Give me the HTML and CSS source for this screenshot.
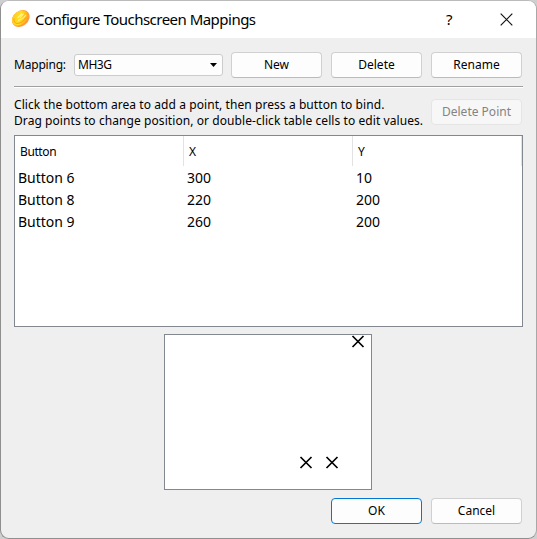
FILE: index.html
```
<!DOCTYPE html>
<html lang="en">
<head>
<meta charset="utf-8">
<title>Configure Touchscreen Mappings</title>
<link rel="stylesheet" href="styles.css">
</head>
<body>
<div class="dialog">
  <header class="titlebar">
    <svg class="logo" width="20" height="20" viewBox="0 0 20 20">
      <defs><linearGradient id="g" x1="0" y1="0" x2="1" y2="1"><stop offset="0" stop-color="#ffc22a"/><stop offset=".5" stop-color="#ffe01b"/><stop offset="1" stop-color="#ff9418"/></linearGradient></defs>
      <ellipse cx="9.800" cy="9.500" rx="9.600" ry="7.500" transform="rotate(-40 9.800 9.500)" fill="#ff9a3a"/>
      <ellipse cx="8.900" cy="9" rx="8.800" ry="6.500" transform="rotate(-40 8.900 9)" fill="url(#g)"/>
      <path d="M6.500 9 11 4.500M9 9l3.500-4.400M7 11.500l5-2.100 3-3.400" stroke="#fff48a" stroke-width="1.100" fill="none"/>
      <path d="M3 9.500q-.5 5 4 5t8-6" stroke="#ffa41e" stroke-width="1" fill="none"/>
    </svg>
    <h1 class="title">Configure Touchscreen Mappings</h1>
    <span class="help">?</span>
    <svg class="close" width="13" height="13" viewBox="0 0 13 13"><path d="M.7.7l11.600 11.600M12.300.7.7 12.300" stroke="#111" stroke-width="1.200"/></svg>
  </header>
  <main class="content">
    <div class="toolbar">
      <span class="label">Mapping:</span>
      <div class="select"><span>MH3G</span><svg width="7" height="4" viewBox="0 0 7 4"><path d="M0 0h7L3.500 4z"/></svg></div>
      <button class="btn">New</button>
      <button class="btn">Delete</button>
      <button class="btn">Rename</button>
    </div>
    <div class="rule"></div>
    <div class="info">
      <p class="hint">Click the bottom area to add a point, then press a button to bind.<br>Drag points to change position, or double-click table cells to edit values.</p>
      <button class="btn" disabled>Delete Point</button>
    </div>
    <div class="table">
      <div class="head"><span>Button</span><span>X</span><span>Y</span></div>
      <div class="row"><span>Button 6</span><span>300</span><span>10</span></div>
      <div class="row"><span>Button 8</span><span>220</span><span>200</span></div>
      <div class="row"><span>Button 9</span><span>260</span><span>200</span></div>
    </div>
    <svg class="screen" width="208" height="156" viewBox="0 0 208 156">
      <rect x=".5" y=".5" width="207" height="155" fill="#fff" stroke="#828790"/>
      <path d="M188.500 2l11 11m0-11l-11 11M136.500 123l11 11m0-11l-11 11M162.500 123l11 11m0-11l-11 11" stroke="#000" stroke-width="1.700"/>
    </svg>
    <div class="actions"><button class="btn primary">OK</button><button class="btn">Cancel</button></div>
  </main>
</div>
</body>
</html>
```
FILE: styles.css
```
* { box-sizing: border-box; }
body {
  margin: 0;
  width: 537px;
  height: 539px;
  overflow: hidden;
  background: #cfcfcf;
  font: 12px/16px "Noto Sans", sans-serif;
  color: #000;
}
.dialog {
  width: 537px;
  height: 539px;
  border: 1px solid #8f8f8f;
  border-top-color: #bbb;
  border-right-color: #a8a8a8;
  border-radius: 9px;
  background: #efefef;
  overflow: hidden;
}
.titlebar {
  display: flex;
  align-items: center;
  height: 37px;
  padding: 0 23px 1px 10px;
  background: #fff;
}
.title {
  margin: 0 0 0 4px;
  flex: 1;
  font-size: 15px;
  font-weight: 400;
  line-height: 20px;
  letter-spacing: -0.52px;
  white-space: nowrap;
}
.help { width: 9px; margin-right: 45px; font-size: 15px; line-height: 20px; }
.content { display: flex; flex-direction: column; padding: 14px 13px 0; }
.toolbar { display: flex; align-items: center; height: 26px; }
.label { width: 60px; letter-spacing: -0.2px; white-space: nowrap; }
.select {
  display: flex;
  align-items: center;
  justify-content: space-between;
  width: 149px;
  height: 22px;
  margin-right: 8px;
  padding: 0 5px 0 3px;
  border: 1px solid #ccc;
  border-radius: 3px;
  background: #fdfdfd;
  letter-spacing: -0.5px;
}
.btn {
  flex: none;
  width: 91px;
  height: 26px;
  padding: 0;
  border: 1px solid #d0d0d0;
  border-bottom-color: #bbb;
  border-radius: 4px;
  background: #fdfdfd;
  color: #000;
  font: inherit;
}
.btn + .btn { margin-left: 9px; }
.btn:disabled { border-color: #e5e5e5; background: #f7f7f7; color: #838383; }
.btn.primary { border-color: #0078d4; }
.rule { height: 2px; margin-top: 8px; background: #a0a0a0; border-bottom: 1px solid #fff; }
.info { display: flex; justify-content: space-between; height: 37px; margin-top: 9px; }
.hint { margin: 0; letter-spacing: 0.075px; white-space: nowrap; }
.info .btn { margin: 2px 1px 0 0; }
.table { width: 509px; height: 192px; margin-top: 1px; border: 1px solid #828790; background: #fff; }
.head, .row { display: grid; grid-template-columns: 169px 169px 169px; }
.head { height: 31px; line-height: 32px; letter-spacing: -0.4px; }
.head span { height: 30px; padding-left: 5px; border-right: 1px solid #e2e2e2; }
.row { height: 22px; font-size: 14px; line-height: 22px; }
.row span { padding-left: 3px; }
.screen { align-self: center; margin: 7px 1px 0 0; }
.actions { display: flex; justify-content: flex-end; margin: 8px 1px 0 0; }
```
